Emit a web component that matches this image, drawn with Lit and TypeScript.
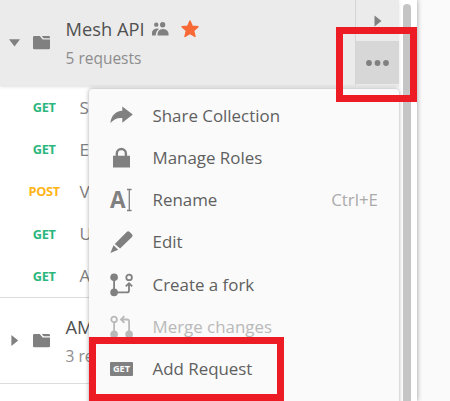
import { LitElement, html, css, svg } from "lit";
import { customElement } from "lit/decorators.js";
import { classMap } from "lit/directives/class-map.js";

const icons: Record<string, unknown> = {
  share: svg`<path d="M0.4 19C1.2 11.2 5.8 7.2 12.3 6.7V2.4L22.8 10.6L12.3 18.8V14C7.5 13.5 3.8 15.3 0.4 19Z"/>`,
  lock: svg`<path d="M3 9.7H5.6V7.5A5.75 5.75 0 0 1 17.1 7.5V9.7H20V21.4H3ZM8 9.7H14.7V7.7A3.35 3.35 0 0 0 8 7.7Z" fill-rule="evenodd"/>`,
  rename: svg`<path d="M17 1.5H21.6M17 22.5H21.6M19.3 1.5V22.5" fill="none" stroke="currentColor" stroke-width="1.3"/>`,
  edit: svg`<path d="M4.8 13.9L16.7 2Q18.2 .5 19.7 2L22 4.3Q23.3 5.6 22 6.9L10.1 18.6ZM3.5 15.2L8.2 19.8L.4 22.9Z"/>`,
  fork: svg`<circle cx="4.1" cy="4.2" r="3.8"/><circle cx="4.1" cy="19.4" r="3.8"/><g fill="none" stroke="currentColor" stroke-width="1.8"><path d="M4.1 4V19.4H17Q19 19.4 19 17.4V11M15.8 13.3L19 10.2L22.2 13.3"/><circle cx="19.1" cy="4.4" r="2.8"/></g>`,
  merge: svg`<circle cx="4.1" cy="19.4" r="3.8"/><circle cx="19.1" cy="19.4" r="3.8"/><g fill="none" stroke="currentColor" stroke-width="1.8"><path d="M4.1 7V19M19.1 19V6.5Q19.1 4.5 17.1 4.5H11.2M14.4 1.1L11 4.5L14.4 7.9"/><circle cx="4.1" cy="4.4" r="2.8"/></g>`,
};

const menuItems = [
  { icon: "share", label: "Share Collection" },
  { icon: "lock", label: "Manage Roles" },
  { icon: "rename", label: "Rename", keys: "Ctrl+E" },
  { icon: "edit", label: "Edit" },
  { icon: "fork", label: "Create a fork" },
  { icon: "merge", label: "Merge changes", disabled: true },
  { icon: "get", label: "Add Request" },
];

const requests = [
  ["GET", "S"],
  ["GET", "E"],
  ["POST", "V"],
  ["GET", "U"],
  ["GET", "A"],
];

const folder = svg`<path d="M0 1.2Q0 0 1.2 0H6.8L9.6 3.4H17V12Q17 13.2 15.8 13.2H1.2Q0 13.2 0 12ZM8.8 0H15.8Q17 0 17 1.2V2.2H10.6Z"/>`;

@customElement("context-menu")
export class ContextMenu extends LitElement {
  static styles = css`
    :host { display: block; box-sizing: border-box; padding-top: 5.8px; background: #fafafa;
      border-radius: 4px 4px 0 0; box-shadow: 0 0 4px rgba(0,0,0,.35); }
    .item { display: flex; align-items: center; height: 42.2px; padding: 0 21px 0 21px;
      font-size: 16.9px; line-height: 22px; color: #606060; white-space: nowrap; }
    .icon { position: relative; flex: none; width: 24px; height: 24px; margin-right: 18.5px; color: #808080; }
    .icon svg { display: block; width: 24px; height: 24px; fill: currentColor; }
    .letter { position: absolute; left: 0; top: 0; font-weight: 700; font-size: 22.5px; line-height: 24px; }
    .badge { display: flex; align-items: center; justify-content: center; width: 23px; height: 14px;
      margin-top: 4.5px; border-radius: 1px; background: #808080; color: #fafafa; font-size: 9.2px;
      line-height: 10px; font-weight: 700; }
    .keys { margin-left: auto; color: #ababab; }
    .disabled, .disabled .icon { color: #b9b9b9; }
  `;
  render() {
    return menuItems.map((m) => html`
      <div class=${classMap({ item: true, disabled: !!m.disabled })}>
        <span class="icon">
          ${m.icon === "get" ? html`<span class="badge">GET</span>` : html`<svg viewBox="0 0 24 24">${icons[m.icon]}</svg>`}
          ${m.icon === "rename" ? html`<span class="letter">A</span>` : ""}
        </span>
        <span>${m.label}</span>
        ${m.keys ? html`<span class="keys">${m.keys}</span>` : ""}
      </div>`);
  }
}

@customElement("app-root")
export class AppRoot extends LitElement {
  static styles = css`
    :host { display: block; position: relative; width: 450px; height: 401px; overflow: hidden;
      background: #fafafa; font-family: "Open Sans", "Noto Sans", sans-serif; }
    .sidebar { display: flex; width: 417px; height: 401px; background: #fff; box-shadow: 0 0 5px rgba(0,0,0,.4); }
    .list { width: 399px; }
    .collection { display: flex; box-sizing: border-box; height: 86px; border-bottom: 1px solid #dcdcdc; }
    .collection.open { background: #ebebeb; border-color: #e8e8e8; box-shadow: 0 1px 3px rgba(0,0,0,.12); }
    .toggle { display: flex; justify-content: center; width: 29px; padding-top: 37px; }
    .toggle svg { width: 11px; height: 11px; fill: #808080; }
    .folder { width: 17px; height: 14px; margin: 35.5px 16px 0 4px; fill: #808080; }
    .info { flex: 1; padding-top: 15px; margin-left: -0.5px; }
    .title { display: flex; align-items: center; height: 26px; font-size: 18.3px; color: #505050; white-space: nowrap; }
    .people { width: 17px; height: 14.2px; margin: 1.5px 0 0 7.5px; fill: #808080; }
    .star { width: 18px; height: 18px; margin: 1px 0 0 11.5px; fill: #f76936; stroke: #f76936; stroke-width: 1.4; stroke-linejoin: round; }
    .count { font-size: 15.5px; line-height: 22px; margin-top: 5.5px; color: #8d8d8d; }
    .actions { width: 43px; border-left: 1px solid #d5d5d5; }
    .run { display: flex; align-items: center; justify-content: center; height: 41px; }
    .run svg { width: 8px; height: 12px; fill: #808080; }
    .more { display: flex; align-items: center; justify-content: center; height: 43px; background: #d7d7d7; }
    .more svg { width: 23px; height: 6px; margin-top: 1px; fill: #808080; }
    .requests { box-sizing: border-box; height: 212px; border-bottom: 1px solid #dcdcdc; }
    .request { display: flex; align-items: center; height: 42.2px; }
    .method { box-sizing: border-box; width: 79.5px; padding-left: 9px; text-align: center; color: #2bb67d;
      font-size: 12.8px; font-weight: 700; letter-spacing: -.3px; }
    .method.post { color: #ffb517; }
    .name { font-size: 17px; color: #808080; }
    .gutter { padding: 4px 0 0 4px; }
    .thumb { width: 8px; height: 410px; border-radius: 4px; background: #c5c5c5; }
    context-menu { position: absolute; left: 89px; top: 89px; width: 310px; height: 330px; }
    .mark { position: absolute; box-sizing: border-box; border: 7px solid #ed1c24; }
    .mark.more-mark { left: 336px; top: 27px; width: 81px; height: 75px; }
    .mark.add-mark { left: 89px; top: 337px; width: 195px; height: 64px; }
  `;

  private collection(name: string, count: string, open: boolean) {
    return html`<div class=${classMap({ collection: true, open })}>
      <div class="toggle"><svg viewBox="0 0 11 11">${open ? svg`<path d="M0 2.2H11L5.5 9.5Z"/>` : svg`<path d="M2.4 0L9.2 5.5L2.4 11Z"/>`}</svg></div>
      <svg class="folder" viewBox="0 0 17 14">${folder}</svg>
      <div class="info">
        <div class="title">${name}${open ? html`
          <svg class="people" viewBox="0 0 18 15"><circle cx="4.5" cy="2.8" r="2.3"/><circle cx="11.3" cy="2.9" r="2.8"/><path d="M0 14.3V11.5Q0 7.8 5 7Q6.6 6.8 7.4 7.3Q4 9.5 4 14.3ZM5.9 14.3Q5.4 7.6 11.6 7.4Q18 7.8 17.6 14.3Z"/></svg>
          <svg class="star" viewBox="0 0 18 18"><path d="M9 1L11.3 6.3L17 6.8L12.6 10.6L14 16.5L9 13.3L4 16.5L5.4 10.6L1 6.8L6.7 6.3Z"/></svg>` : ""}</div>
        <div class="count">${count}</div>
      </div>
      ${open ? html`<div class="actions">
        <div class="run"><svg viewBox="0 0 8 12"><path d="M.5 .5L7.5 6L.5 11.5Z"/></svg></div>
        <div class="more"><svg viewBox="0 0 23 6"><circle cx="3" cy="3" r="2.9"/><circle cx="11.5" cy="3" r="2.9"/><circle cx="20" cy="3" r="2.9"/></svg></div>
      </div>` : ""}
    </div>`;
  }

  render() {
    return html`
      <div class="sidebar">
        <div class="list">
          ${this.collection("Mesh API", "5 requests", true)}
          <div class="requests">
            ${requests.map(([method, name]) => html`<div class="request">
              <span class=${classMap({ method: true, post: method === "POST" })}>${method}</span>
              <span class="name">${name}</span>
            </div>`)}
          </div>
          ${this.collection("AM", "3 re", false)}
        </div>
        <div class="gutter"><div class="thumb"></div></div>
      </div>
      <context-menu></context-menu>
      <div class="mark more-mark"></div>
      <div class="mark add-mark"></div>`;
  }
}
